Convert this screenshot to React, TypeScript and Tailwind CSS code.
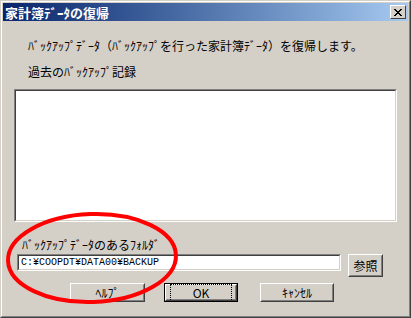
import React from 'react';

const font = { fontFamily: '"Noto Sans CJK JP", "Liberation Sans", sans-serif' };

const Btn: React.FC<{ label: string; w: string; focused?: boolean }> = ({ label, w, focused }) => (
    <div className={`${w} h-[19px] bg-[#d4d0c8] ${focused ? 'border border-black' : ''}`}>
        <div className="h-full border border-t-white border-l-white border-r-[#404040] border-b-[#404040]">
            <div className="h-full flex items-center justify-center border border-t-[#d4d0c8] border-l-[#d4d0c8] border-r-[#808080] border-b-[#808080]">
                <span className={`text-[12px] leading-none text-black ${focused ? 'outline outline-1 outline-dotted outline-black px-[22px] py-[2px]' : ''}`}>{label}</span>
            </div>
        </div>
    </div>
);

export default function App() {
    return (
        <div className="relative w-[411px] h-[318px] overflow-hidden bg-[#d4d0c8]" style={font}>
            <div className="w-full h-full border border-t-[#d4d0c8] border-l-[#d4d0c8] border-r-[#404040] border-b-[#404040]">
                <div className="w-full h-full border border-t-white border-l-white border-r-[#808080] border-b-[#808080] p-px">
                    {/* title bar */}
                    <div className="h-[18px] flex items-center justify-between pl-[2px] pr-[2px] bg-gradient-to-r from-[#0a246a] to-[#a6caf0]">
                        <span className="text-white font-bold text-[13px] leading-none">家計簿ﾃﾞｰﾀの復帰</span>
                        <div className="w-[16px] h-[14px] bg-[#d4d0c8] border border-t-white border-l-white border-r-[#404040] border-b-[#404040] flex items-center justify-center">
                            <svg width="8" height="7" viewBox="0 0 8 7">
                                <path d="M0 0 L7 7 M1 0 L8 7 M7 0 L0 7 M8 0 L1 7" stroke="black" strokeWidth="1" shapeRendering="crispEdges" />
                            </svg>
                        </div>
                    </div>

                    <div className="pl-[25px] pt-[18px] text-[12px] leading-[14px] text-black">
                        ﾊﾞｯｸｱｯﾌﾟﾃﾞｰﾀ（ﾊﾞｯｸｱｯﾌﾟを行った家計簿ﾃﾞｰﾀ）を復帰します。
                    </div>
                    <div className="pl-[25px] pt-[12px] text-[12px] leading-[14px] text-black">
                        過去のﾊﾞｯｸｱｯﾌﾟ記録
                    </div>

                    {/* list box */}
                    <div className="ml-[11px] mt-[10px] w-[383px] h-[133px] border border-t-[#808080] border-l-[#808080] border-r-white border-b-white">
                        <div className="w-full h-full bg-white border border-t-[#404040] border-l-[#404040] border-r-[#d4d0c8] border-b-[#d4d0c8]" />
                    </div>

                    <div className="pl-[19px] pt-[16px] text-[12px] leading-[14px] text-black">
                        ﾊﾞｯｸｱｯﾌﾟﾃﾞｰﾀのあるﾌｫﾙﾀﾞ
                    </div>

                    <div className="flex items-start pl-[14px] pt-[2px]">
                        <div className="w-[324px] h-[17px] border border-t-[#808080] border-l-[#808080] border-r-white border-b-white">
                            <div className="w-full h-full bg-white border border-t-[#404040] border-l-[#404040] border-r-[#d4d0c8] border-b-[#d4d0c8] flex items-center pl-[2px]">
                                <span className="text-[10px] leading-none text-black font-['Liberation_Mono',monospace]">C:¥COOPDT¥DATA00¥BACKUP</span>
                            </div>
                        </div>
                        <div className="ml-[7px]">
                            <Btn label="参照" w="w-[35px] h-[23px]" />
                        </div>
                    </div>

                    <div className="flex pl-[67px] pt-[6px]">
                        <Btn label="ﾍﾙﾌﾟ" w="w-[75px]" />
                        <div className="ml-[19px]"><Btn label="OK" w="w-[74px]" focused /></div>
                        <div className="ml-[22px]"><Btn label="ｷｬﾝｾﾙ" w="w-[74px]" /></div>
                    </div>
                </div>
            </div>

            {/* red annotation ellipse */}
            <svg className="absolute left-0 top-0 pointer-events-none" width="411" height="318">
                <ellipse cx="92" cy="258" rx="84" ry="44" fill="none" stroke="#ff0000" strokeWidth="4" transform="rotate(-2 92 258)" />
            </svg>
        </div>
    );
}
